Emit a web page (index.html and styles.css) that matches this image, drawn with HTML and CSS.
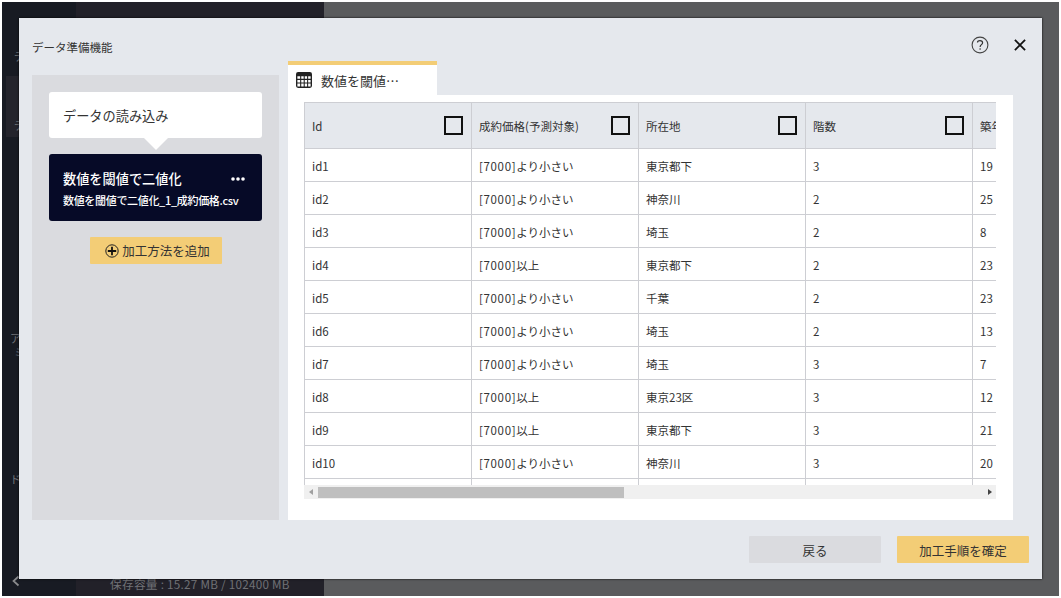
FILE: index.html
```html
<!DOCTYPE html>
<html lang="ja">
<head>
<meta charset="utf-8">
<title>データ準備機能</title>
<link rel="stylesheet" href="styles.css">
</head>
<body>
<div class="app">
  <nav class="rail">
    <span class="rail-item">デ</span>
    <span class="rail-item active">デ</span>
    <span class="rail-item model">ア<br><span class="second">ミ</span></span>
    <span class="rail-item docs">ド</span>
    <svg class="back" viewBox="0 0 8 12"><path d="M6.5 1.5 1.5 6 6.5 10.5" fill="none" stroke="#8a8b8d" stroke-width="1.7"/></svg>
  </nav>
  <aside class="storage">保存容量 : 15.27 MB / 102400 MB</aside>
  <section class="modal">
    <header class="modal-head">
      <h1>データ準備機能</h1>
      <svg class="help" viewBox="0 0 18 18"><circle cx="9" cy="9" r="7.9" fill="none" stroke="#444" stroke-width="1.1"/><path d="M6.5 6.6C6.5 5.2 7.6 4.6 9 4.6S11.6 5.3 11.6 6.7C11.6 8.6 9.1 8.7 9.1 10.9" fill="none" stroke="#333" stroke-width="1.2"/><circle cx="9.1" cy="13" r=".8" fill="#333"/></svg>
      <svg class="close" viewBox="0 0 12 12"><path d="M.9.9 11.1 11.1M11.1.9.9 11.1" stroke="#111" stroke-width="1.8"/></svg>
    </header>
    <div class="modal-body">
      <div class="steps">
        <div class="step">データの読み込み</div>
        <div class="arrow"></div>
        <div class="step current">
          <div class="step-title"><span>数値を閾値で二値化</span><svg class="dots" viewBox="0 0 14 4"><circle cx="2" cy="2" r="1.8"/><circle cx="7" cy="2" r="1.8"/><circle cx="12" cy="2" r="1.8"/></svg></div>
          <div class="step-file">数値を閾値で二値化_1_成約価格.csv</div>
        </div>
        <button class="btn add"><svg class="plus" viewBox="0 0 14 14"><circle cx="7" cy="7" r="6.2" fill="none" stroke="#222" stroke-width="1"/><path d="M7 2.8V11.2M2.8 7H11.2" stroke="#111" stroke-width="1.8"/></svg><span>加工方法を追加</span></button>
      </div>
      <div class="preview">
        <div class="tab"><svg class="grid-icon" viewBox="0 0 15 15"><rect width="15" height="15" rx="2" fill="#222"/><path fill="#fff" d="M1.3 4h2.6v2.4H1.3zM4.9 4h2.3v2.4H4.9zM8.2 4h2.2v2.4H8.2zM11.4 4h2.3v2.4h-2.3zM1.3 7.4h2.6v2.4H1.3zM4.9 7.4h2.3v2.4H4.9zM8.2 7.4h2.2v2.4H8.2zM11.4 7.4h2.3v2.4h-2.3zM1.3 10.8h2.6v2.8H1.3zM4.9 10.8h2.3v2.8H4.9zM8.2 10.8h2.2v2.8H8.2zM11.4 10.8h2.3v2.8h-2.3z"/></svg><span>数値を閾値…</span></div>
        <div class="panel">
          <div class="viewport">
            <table>
              <thead><tr>
                <th><div class="th"><span>Id</span><i class="check"></i></div></th>
                <th><div class="th"><span>成約価格(予測対象)</span><i class="check"></i></div></th>
                <th><div class="th"><span>所在地</span><i class="check"></i></div></th>
                <th><div class="th"><span>階数</span><i class="check"></i></div></th>
                <th><div class="th"><span>築年</span></div></th>
              </tr></thead>
              <tbody>
                <tr><td>id1</td><td><span class="num">[7000]</span>より小さい</td><td>東京都下</td><td>3</td><td>19</td></tr>
                <tr><td>id2</td><td><span class="num">[7000]</span>より小さい</td><td>神奈川</td><td>2</td><td>25</td></tr>
                <tr><td>id3</td><td><span class="num">[7000]</span>より小さい</td><td>埼玉</td><td>2</td><td>8</td></tr>
                <tr><td>id4</td><td><span class="num">[7000]</span>以上</td><td>東京都下</td><td>2</td><td>23</td></tr>
                <tr><td>id5</td><td><span class="num">[7000]</span>より小さい</td><td>千葉</td><td>2</td><td>23</td></tr>
                <tr><td>id6</td><td><span class="num">[7000]</span>より小さい</td><td>埼玉</td><td>2</td><td>13</td></tr>
                <tr><td>id7</td><td><span class="num">[7000]</span>より小さい</td><td>埼玉</td><td>3</td><td>7</td></tr>
                <tr><td>id8</td><td><span class="num">[7000]</span>以上</td><td>東京23区</td><td>3</td><td>12</td></tr>
                <tr><td>id9</td><td><span class="num">[7000]</span>以上</td><td>東京都下</td><td>3</td><td>21</td></tr>
                <tr><td>id10</td><td><span class="num">[7000]</span>より小さい</td><td>神奈川</td><td>3</td><td>20</td></tr>
                <tr><td></td><td></td><td></td><td></td><td></td></tr>
              </tbody>
            </table>
          </div>
          <div class="scrollbar"><svg class="sb-arrow" viewBox="0 0 4 6"><path d="M4 0V6L0 3z" fill="#a0a0a0"/></svg><div class="thumb"></div><svg class="sb-arrow" viewBox="0 0 4 6"><path d="M0 0V6L4 3z" fill="#444"/></svg></div>
        </div>
      </div>
    </div>
    <footer class="modal-foot">
      <button class="btn back-btn">戻る</button>
      <button class="btn confirm">加工手順を確定</button>
    </footer>
  </section>
</div>
</body>
</html>
```
FILE: styles.css
```css
* { box-sizing: border-box; }
body {
  margin: 0;
  height: 598px;
  padding: 2px;
  overflow: hidden;
  background: #fff;
  color: #333;
  font-family: "Noto Sans CJK JP", "Noto Sans", sans-serif;
  font-size: 11.5px;
}
svg { display: block; flex: none; }
.app {
  position: relative;
  display: flex;
  width: 1057px;
  height: 594px;
  background: #5a5b5d;
  overflow: hidden;
}
.rail {
  display: flex;
  flex-direction: column;
  width: 74px;
  padding-top: 47px;
  background: #181b23;
  color: #707277;
  font-size: 11px;
  line-height: 14px;
}
.rail-item { padding-left: 12px; }
.rail-item.active {
  margin: 13px 0 0 4px;
  height: 61px;
  padding: 42px 0 0 8px;
  background: #24242c;
}
.rail-item.model { margin-top: 194px; padding-left: 8px; }
.second { padding-left: 4px; }
.rail-item.docs { margin-top: 113px; padding-left: 8px; }
.back { width: 8px; height: 12px; margin: 89px 0 0 10px; }
.storage {
  display: flex;
  align-items: flex-end;
  width: 248px;
  padding: 0 0 3px 34px;
  background: #222129;
  color: #707176;
  font-size: 11.7px;
  letter-spacing: 0.26px;
  line-height: 18px;
  white-space: nowrap;
}
.modal {
  position: absolute;
  left: 17px;
  top: 16px;
  display: flex;
  flex-direction: column;
  width: 1023px;
  height: 561px;
  background: #e5e8ed;
  box-shadow: 0 0 2px #000;
}
.modal-head {
  display: flex;
  align-items: center;
  height: 43px;
  padding: 10px 16px 0 13px;
}
h1 { margin: 4px auto 0 0; font-size: 11.5px; font-weight: 400; line-height: 18px; }
.help { width: 18px; height: 18px; margin-right: 25px; }
.close { width: 12px; height: 12px; }
.modal-body {
  display: flex;
  gap: 8px;
  height: 459px;
  padding: 0 29px 0 13px;
}
.steps {
  display: flex;
  flex-direction: column;
  align-items: center;
  width: 247px;
  margin: 14px 1px 0 0;
  padding-top: 17px;
  background: #dadbdf;
}
.step {
  width: 213px;
  height: 46px;
  padding-left: 14px;
  border-radius: 3px;
  background: #fff;
  font-size: 13.2px;
  line-height: 48px;
}
.arrow {
  border: 12px solid transparent;
  border-top: 12px solid #fff;
  border-bottom: 0;
  margin-bottom: 4px;
}
.step.current {
  height: 67px;
  padding: 15px 17px 0 14px;
  background: #060a27;
  color: #fff;
  font-weight: 500;
  line-height: 20px;
}
.step-title { display: flex; align-items: center; justify-content: space-between; }
.dots { width: 14px; height: 4px; fill: #fff; }
.step-file { font-size: 11px; letter-spacing: -0.32px; line-height: 22px; white-space: nowrap; }
.btn {
  display: flex;
  align-items: center;
  justify-content: center;
  width: 132px;
  height: 27px;
  padding: 1px 0 0;
  border: 0;
  border-radius: 1px;
  background: #f3cd76;
  color: #333;
  font: 400 12.5px "Noto Sans CJK JP", sans-serif;
}
.add { gap: 3px; margin-top: 16px; padding: 0 0 0 4px; }
.plus { width: 14px; height: 14px; }
.preview { width: 725px; }
.tab {
  display: flex;
  align-items: center;
  gap: 9px;
  width: 149px;
  height: 34px;
  padding-left: 8px;
  border-top: 4px solid #f3cd76;
  background: #fff;
  font-size: 13px;
}
.grid-icon { width: 16px; height: 16px; }
.panel { height: 425px; padding: 7px 17px 0 16px; background: #fff; }
.viewport { height: 383px; overflow: hidden; }
table {
  width: 836px;
  table-layout: fixed;
  border-spacing: 0;
  border-top: 1px solid #cdced3;
  border-left: 1px solid #cdced3;
}
th, td {
  height: 33px;
  padding: 1px 0 0 7px;
  border-right: 1px solid #cdced3;
  border-bottom: 1px solid #cdced3;
  font-weight: 400;
  text-align: left;
  line-height: 18px;
  white-space: nowrap;
}
th { height: 46px; padding: 0 8px 0 7px; background: #e5e8ed; }
.num { letter-spacing: 0.65px; }
.th { display: flex; align-items: center; justify-content: space-between; }
.check { width: 19px; height: 19px; border: 2px solid #111; }
.scrollbar {
  display: flex;
  align-items: center;
  height: 14px;
  padding: 0 4px 0 5px;
  background: #f0f0f0;
}
.sb-arrow { width: 4px; height: 6px; }
.thumb { width: 306px; height: 11px; margin: 0 auto 0 5px; background: #bfbfbf; }
.modal-foot {
  display: flex;
  justify-content: flex-end;
  gap: 16px;
  padding: 16px 13px 0 0;
}
.back-btn { background: #dadbdf; }
```
